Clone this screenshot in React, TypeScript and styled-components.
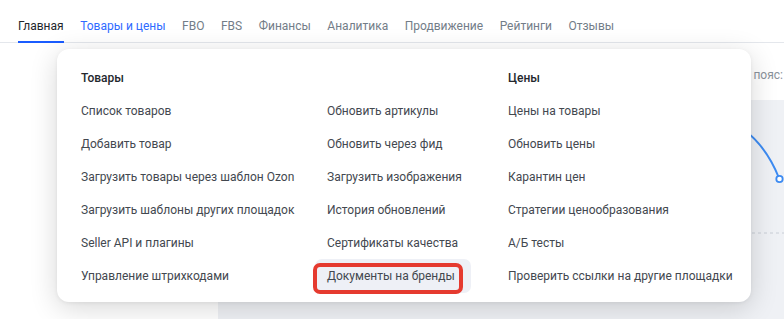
import styled, { createGlobalStyle } from "styled-components";

const tabs = ["Главная", "Товары и цены", "FBO", "FBS", "Финансы", "Аналитика", "Продвижение", "Рейтинги", "Отзывы"];

const goods = [
  "Список товаров",
  "Добавить товар",
  "Загрузить товары через шаблон Ozon",
  "Загрузить шаблоны других площадок",
  "Seller API и плагины",
  "Управление штрихкодами",
];

const updates = [
  "Обновить артикулы",
  "Обновить через фид",
  "Загрузить изображения",
  "История обновлений",
  "Сертификаты качества",
  "Документы на бренды",
];

const prices = [
  "Цены на товары",
  "Обновить цены",
  "Карантин цен",
  "Стратегии ценообразования",
  "А/Б тесты",
  "Проверить ссылки на другие площадки",
];

export default function App() {
  return (
    <>
      <GlobalStyle />
      <Page>
        <TabBar>
          {tabs.map((t, i) => (
            <Tab key={t} $active={i === 0} $hover={i === 1}>
              {t}
            </Tab>
          ))}
        </TabBar>
        <Body>
          <Sidebar />
          <Main>
            <MainHeader>Часовой пояс:</MainHeader>
            <ChartPanel>
              <svg width="566" height="176" viewBox="0 0 566 176">
                <line x1="0" y1="133" x2="566" y2="133" stroke="#c9ced6" strokeDasharray="3 3" />
                <path d="M470 12 C515 12, 545 38, 561 78" fill="none" stroke="#3d8bf2" strokeWidth="2" />
                <circle cx="561.5" cy="79" r="3.2" fill="#fff" stroke="#3d8bf2" strokeWidth="1.8" />
              </svg>
            </ChartPanel>
          </Main>

          <Menu>
            <Column>
              <Heading>Товары</Heading>
              {goods.map((g) => (
                <Item key={g}>
                  <ItemText>{g}</ItemText>
                </Item>
              ))}
            </Column>
            <Column>
              <Heading />
              {updates.map((u, i) => (
                <Item key={u}>
                  <ItemText $selected={i === updates.length - 1}>
                    {u}
                    {i === updates.length - 1 && <Mark />}
                  </ItemText>
                </Item>
              ))}
            </Column>
            <Column>
              <Heading>Цены</Heading>
              {prices.map((p) => (
                <Item key={p}>
                  <ItemText>{p}</ItemText>
                </Item>
              ))}
            </Column>
          </Menu>
        </Body>
      </Page>
    </>
  );
}

const GlobalStyle = createGlobalStyle`
  body {
    margin: 0;
    font-family: Roboto, "Noto Sans", sans-serif;
    background: #fff;
  }
`;

const Page = styled.div`
  width: 784px;
  height: 319px;
  overflow: hidden;
  display: flex;
  flex-direction: column;
`;

const TabBar = styled.div`
  display: flex;
  gap: 16.5px;
  padding-left: 18px;
  height: 42px;
  border-bottom: 1px solid #e4e7ec;
  flex-shrink: 0;
`;

const Tab = styled.div<{ $active?: boolean; $hover?: boolean }>`
  box-sizing: border-box;
  height: 43px;
  padding-top: 18px;
  font-size: 12px;
  line-height: 17px;
  white-space: nowrap;
  color: ${(p) => (p.$active ? "#22262b" : p.$hover ? "#2f6bff" : "#737d88")};
  border-bottom: 2px solid ${(p) => (p.$active ? "#1a5cff" : "transparent")};
`;

const Body = styled.div`
  position: relative;
  flex: 1;
  display: flex;
`;

const Sidebar = styled.div`
  width: 218px;
  flex-shrink: 0;
  background: #fff;
`;

const Main = styled.div`
  flex: 1;
  display: flex;
  flex-direction: column;
`;

const MainHeader = styled.div`
  box-sizing: border-box;
  height: 57px;
  padding: 6px 1px 0 0;
  display: flex;
  align-items: center;
  justify-content: flex-end;
  font-size: 12px;
  color: #8a929b;
  white-space: nowrap;
`;

const ChartPanel = styled.div`
  flex: 1;
  background: #eff1f5;
  svg {
    display: block;
  }
`;

const Menu = styled.div`
  position: absolute;
  left: 57px;
  top: 6px;
  width: 694px;
  height: 253px;
  box-sizing: border-box;
  padding: 13px 0 0 24px;
  background: #fff;
  border-radius: 12px;
  box-shadow: 0 6px 28px rgba(0, 0, 0, 0.16), 0 1px 4px rgba(0, 0, 0, 0.06);
  display: grid;
  grid-template-columns: 246px 181px 1fr;
`;

const Column = styled.div`
  display: flex;
  flex-direction: column;
`;

const Heading = styled.div`
  height: 32px;
  display: flex;
  align-items: center;
  font-size: 12px;
  font-weight: 500;
  color: #23272d;
`;

const Item = styled.div`
  height: 33px;
  display: flex;
  align-items: center;
`;

const ItemText = styled.span<{ $selected?: boolean }>`
  position: relative;
  font-size: 12px;
  line-height: 18px;
  color: #43484f;
  white-space: nowrap;
  ${(p) =>
    p.$selected &&
    `
    margin-left: -12px;
    padding: 8px 16px 8px 12px;
    background: #eef0f6;
    border-radius: 7px;
  `}
`;

const Mark = styled.span`
  position: absolute;
  left: -2px;
  top: 4px;
  width: 150px;
  height: 31px;
  box-sizing: border-box;
  border: 4px solid #e53a2f;
  border-radius: 7px;
`;
